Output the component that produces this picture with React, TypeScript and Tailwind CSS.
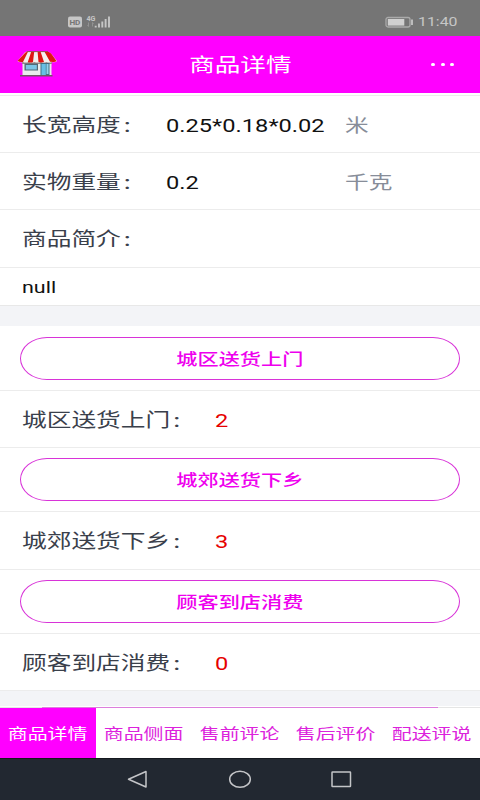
import type { ReactNode } from "react";
import { clsx } from "clsx";

interface WideTextProps {
    children: ReactNode;
    className?: string;
}

// Text in the wide face used all over the page
function WideText({ children, className }: WideTextProps) {
    return (
        <span className={clsx("block scale-x-[1.3] whitespace-nowrap", className)}>
            {children}
        </span>
    );
}

function StatusBar() {
    return (
        <div className="h-9 shrink-0 bg-[#757575] flex items-center justify-between pl-[67px] pr-[23px] pt-[7px] text-[#c6c6c6]">
            <svg width="46" height="16" viewBox="0 0 46 16">
                <rect x="1" y="2.5" width="14" height="11" rx="2" fill="#c6c6c6" />
                <text x="2.4" y="10.8" fontSize="7.5" fontWeight="700" textLength="11" lengthAdjust="spacingAndGlyphs" fill="#757575">HD</text>
                <text x="19.5" y="7" fontSize="7" fontWeight="700" textLength="9" lengthAdjust="spacingAndGlyphs" fill="#c6c6c6">4G</text>
                <path d="M21.5 8.5v4M20.5 11l1 1.5M25.5 12.5v-4l1 1.5" stroke="#929292" fill="none" />
                <path d="M28.7 13.5v-1.8M32 13.5v-4M35.3 13.5V7.5M38.6 13.5V5M42 13.5V2.5" stroke="#c6c6c6" strokeWidth="1.9" />
            </svg>
            <div className="flex items-center">
                <svg width="30" height="14" viewBox="0 0 30 14">
                    <rect x="2" y="2.5" width="24" height="9.5" rx="2" fill="none" stroke="#aaaaaa" strokeWidth="1.3" />
                    <rect x="3.8" y="4" width="16.5" height="6.6" fill="#d0d0d0" />
                    <path d="M28 4.5v5.5" stroke="#c6c6c6" strokeWidth="1.8" />
                </svg>
                <div className="w-[39px] ml-[4px]">
                    <WideText className="origin-left text-[12.2px] leading-4 w-0 pt-px">11:40</WideText>
                </div>
            </div>
        </div>
    );
}

function ShopIcon() {
    return (
        <svg width="40" height="28" viewBox="0 0 40 28">
            <path d="M5.5 11h29v13h-29z" fill="#e9ecec" />
            <path d="M3 24h32.5v1.6H3z" fill="#6f5965" />
            <path d="M5 10h30v3H5z" fill="#9a8b8b" />
            <rect x="7.5" y="12.5" width="13.5" height="7" fill="#526a76" />
            <rect x="8.8" y="14" width="11" height="4.5" fill="#7cc5e6" />
            <rect x="23.5" y="12" width="9" height="12" fill="#426f84" />
            <rect x="24.5" y="13" width="4.3" height="11" fill="#67bfe5" />
            <rect x="29.5" y="13" width="2" height="10" fill="#8fd5ee" />
            <path d="M6.5 3Q8 .5 10 .5h20q2.5 0 4.5 2.5L40 10q-1.5 1.8-5 1-3 1-5.5 0-3 1-6 0-3 1-6 0-3 1-6 0-3 1-5.5 0-4 1-5.5-1z" fill="#f4f1ee" />
            <path d="M7 3Q8.5.8 11 .8L6 11Q2 11.5.6 9.8zM14.2.8h3L16 11q-2.5 1-5.2 0zM20.6.8h3L27 11q-2.7.8-5.5 0zM27.5.8H31q2 .2 3.5 2.2L39.5 10q-1.5 1.3-3.3 1l-3.2-.2z" fill="#df1714" />
            <path d="M9.5.6h21.5" stroke="#925055" strokeWidth="1" />
        </svg>
    );
}

function Header() {
    return (
        <header className="h-[57px] shrink-0 bg-[#ff00ff] text-white flex items-center">
            <div className="w-[140px] pl-[17px] pt-px">
                <ShopIcon />
            </div>
            <div className="w-[200px] flex justify-center pt-[3px]">
                <WideText className="text-[19.7px]">商品详情</WideText>
            </div>
            <div className="w-[140px] flex justify-end gap-[5.5px] pr-[26px]">
                <i className="w-1 h-[3px] rounded-full bg-white" />
                <i className="w-1 h-[3px] rounded-full bg-white" />
                <i className="w-1 h-[3px] rounded-full bg-white" />
            </div>
        </header>
    );
}

interface InfoRowProps {
    label: string;
    value?: string;
    unit?: string;
    wide?: boolean;
    className?: string;
}

function InfoRow({ label, value, unit, wide, className }: InfoRowProps) {
    return (
        <div className={clsx("shrink-0 flex items-center pt-1 pl-[21.5px] border-b border-[#ececec]", className)}>
            <div className={wide ? "w-[193.5px]" : "w-[144.5px]"}>
                <WideText className="origin-left w-0 text-[19px] text-[#3a404b]">
                    {label}<span className="ml-[2.5px] font-medium">:</span>
                </WideText>
            </div>
            <div className="w-[179px]">
                <WideText className={clsx("origin-left w-0 text-[18.2px] -mt-px", wide ? "text-[#e60000]" : "text-[#111]")}>
                    {value}
                </WideText>
            </div>
            {unit && <WideText className="origin-left w-0 text-[18.2px] text-[#878d99]">{unit}</WideText>}
        </div>
    );
}

function ActionRow({ text, className }: { text: string; className?: string }) {
    return (
        <div className={clsx("shrink-0 px-5 border-b border-[#ececec]", className)}>
            <button className="w-full h-[43px] pt-[3px] rounded-[27px/21.5px] border border-[#d833d8] text-[#ee00ee] flex items-center justify-center">
                <WideText className="text-[16.3px] font-medium">{text}</WideText>
            </button>
        </div>
    );
}

const tabs = ["商品详情", "商品侧面", "售前评论", "售后评价", "配送评说"];

function TabBar() {
    return (
        <nav className="h-[50px] shrink-0 flex bg-white">
            {tabs.map((tab, i) => (
                <div
                    key={tab}
                    className={clsx(
                        "w-24 flex items-center justify-center pt-[3px]",
                        i === 0 ? "bg-[#ff00ff] text-white" : "text-[#dc22dc]"
                    )}
                >
                    <WideText className="text-[15.3px]">{tab}</WideText>
                </div>
            ))}
        </nav>
    );
}

function SystemNav() {
    return (
        <div className="h-[42px] shrink-0 bg-[#222831] border-t border-[#14181f] flex justify-center">
            <svg width="240" height="41" viewBox="120 759 240 41" fill="none" stroke="#c4c5c8" strokeWidth="1.5">
                <path d="M146 771.5v15.5l-17.5-7.8z" strokeLinejoin="round" />
                <ellipse cx="240" cy="779.2" rx="10.3" ry="8" />
                <rect x="332" y="772" width="18.5" height="14.5" rx="0.5" />
            </svg>
        </div>
    );
}

export default function App() {
    return (
        <div className="w-[480px] h-[800px] overflow-hidden flex flex-col bg-white font-[Roboto,'Noto_Sans_CJK_SC',sans-serif]">
            <StatusBar />
            <Header />
            <main className="h-[615px] shrink-0 overflow-hidden flex flex-col">
                <div className="h-[3px] shrink-0 border-b border-[#ececec]" />
                <InfoRow className="h-[57px]" label="长宽高度" value="0.25*0.18*0.02" unit="米" />
                <InfoRow className="h-[57px]" label="实物重量" value="0.2" unit="千克" />
                <InfoRow className="h-[58px]" label="商品简介" />
                <div className="h-[38px] shrink-0 flex items-center pt-1 pl-[22px] border-b border-[#e8e8e8]">
                    <WideText className="origin-left w-0 text-[16.5px] text-[#111]">null</WideText>
                </div>
                <div className="h-5 shrink-0 bg-[#f3f4f7]" />
                <ActionRow className="h-[65px] pt-[11px]" text="城区送货上门" />
                <InfoRow className="h-[57px]" label="城区送货上门" value="2" wide />
                <ActionRow className="h-[64px] pt-[10px]" text="城郊送货下乡" />
                <InfoRow className="h-[58px]" label="城郊送货下乡" value="3" wide />
                <ActionRow className="h-[64px] pt-[10px]" text="顾客到店消费" />
                <InfoRow className="h-[57px]" label="顾客到店消费" value="0" wide />
                <div className="h-[15px] shrink-0 bg-[#f3f4f7]" />
                <div className="h-px shrink-0 bg-white" />
                <div className="h-px shrink-0 bg-[#e5e5e5] px-[42px]">
                    <div className="h-px bg-[#dc7fdc]" />
                </div>
            </main>
            <TabBar />
            <SystemNav />
        </div>
    );
}
